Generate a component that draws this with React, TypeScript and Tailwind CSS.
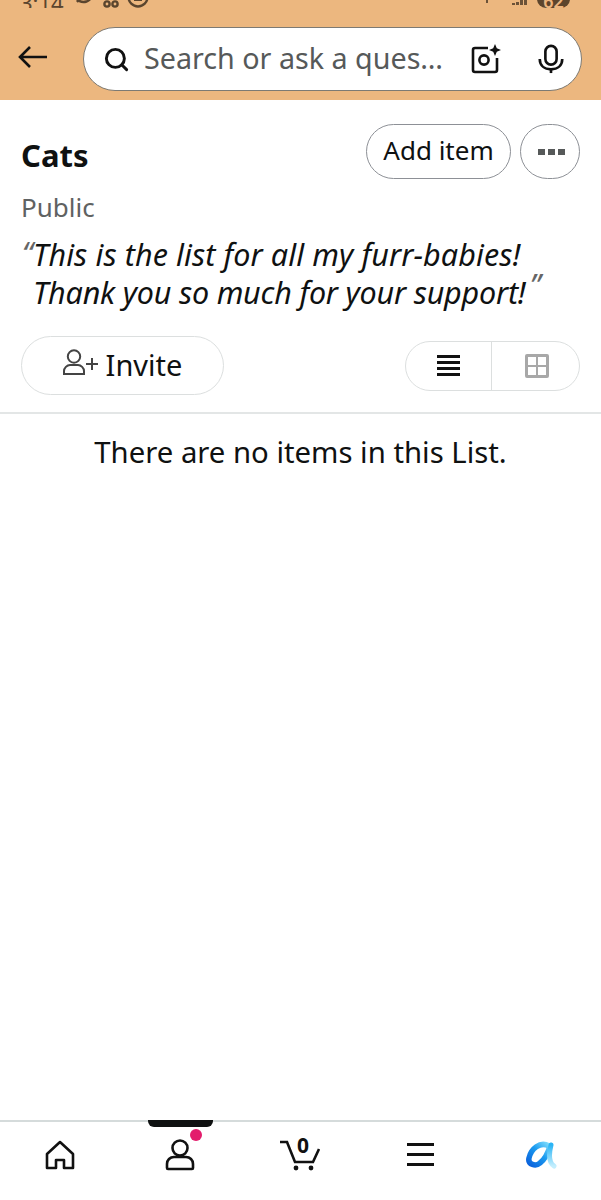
import { Search } from "lucide-react";

const Icon = ({ className, children }: { className: string; children: React.ReactNode }) => (
  <svg viewBox="0 0 32 32" fill="none" stroke="currentColor" strokeWidth="2.6" className={className}>
    {children}
  </svg>
);

const StatusBar = () => (
  <div className="h-[8px] overflow-hidden flex justify-between items-end pl-[20px] pr-[31px] text-[#5a452e]">
    <div className="flex items-end gap-[10px] text-[22px] leading-[16px]">
      <span className="mb-[-2px]">3:14</span>
      <svg viewBox="0 0 76 20" className="w-[76px] h-[20px]" fill="none" stroke="currentColor" strokeWidth="2.4">
        <path d="M1 8a9 9 0 1 0 17-6" />
        <path d="M14 3 3 14" />
        <circle cx="33" cy="16" r="2.6" />
        <circle cx="41" cy="16" r="2.6" />
        <circle cx="64" cy="9" r="9.5" />
        <rect x="60" y="4" width="8" height="9" fill="currentColor" stroke="none" />
      </svg>
    </div>
    <div className="flex items-end gap-[10px]">
      <div className="w-[2px] h-[3px] mb-[5px] bg-[#6b5238] mr-[14px]" />
      <div className="flex items-end gap-[1px] mb-[3px]">
        <i className="block w-[3px] h-[2px] bg-[#6b5238]" />
        <i className="block w-[3px] h-[3px] bg-[#6b5238]" />
        <i className="block w-[3px] h-[5px] bg-[#6b5238]" />
        <i className="block w-[3px] h-[5px] bg-[#6b5238]" />
      </div>
      <div className="w-[33px] h-[20px] rounded-b-[9px] bg-[#5d452c] text-[#edb67f] text-[18px] leading-[26px] text-center font-semibold">
        62
      </div>
    </div>
  </div>
);

const SearchHeader = () => (
  <div className="h-[100px] bg-[#ecb77f]">
    <StatusBar />
    <div className="flex items-center mt-[19px] pl-[18px] pr-[19px]">
      <svg viewBox="0 0 30 24" className="w-[30px] h-[24px] text-[#111] mr-[35px] shrink-0 mt-[-4px]" fill="none" stroke="currentColor" strokeWidth="2.6">
        <path d="M29 12H2M12 2 2 12l10 10" />
      </svg>
      <div className="flex-1 h-[64px] rounded-full bg-white border border-[#7d7a73] flex items-center pl-[19px] pr-[15px]">
        <Search className="w-[27px] h-[27px] text-[#111] shrink-0" strokeWidth={2.6} />
        <span className="ml-[14px] flex-1 text-[28.7px] leading-none text-[#565959] mt-[-2px]">Search or ask a ques…</span>
        <svg viewBox="0 0 32 32" className="w-[32px] h-[32px] text-[#111] shrink-0 mr-[35px]" fill="none" stroke="currentColor" strokeWidth="2.6">
          <path d="M19 5H6a2 2 0 0 0-2 2v20a2 2 0 0 0 2 2h20a2 2 0 0 0 2-2V15" />
          <circle cx="15" cy="17" r="4.6" />
          <path d="M26 1l1.8 4.2L32 7l-4.2 1.8L26 13l-1.8-4.2L20 7l4.2-1.8z" fill="currentColor" stroke="none" />
        </svg>
        <svg viewBox="0 0 32 32" className="w-[30px] h-[32px] text-[#111] shrink-0" fill="none" stroke="currentColor" strokeWidth="2.8">
          <rect x="10" y="2" width="12" height="20" rx="6" />
          <path d="M4 16c0 7 5 11 12 11s12-4 12-11" />
          <path d="M16 26v5" />
        </svg>
      </div>
    </div>
  </div>
);

const ListHeader = () => (
  <div className="pl-[21px] pr-[21px]">
    <div className="flex justify-between pt-[24px]">
      <h1 className="text-[31px] leading-[40px] font-bold text-[#0f1111] mt-[11px]">Cats</h1>
      <div className="flex gap-[9px]">
        <button className="w-[145px] h-[55px] rounded-full border border-[#8d9096] text-[26px] text-[#0f1111] leading-none pb-[3px]">
          Add item
        </button>
        <button className="w-[60px] h-[55px] rounded-full border border-[#8d9096] flex items-center justify-center gap-[3px] pl-[3px]">
          <i className="block w-[7px] h-[6px] bg-[#565959]" />
          <i className="block w-[7px] h-[6px] bg-[#565959]" />
          <i className="block w-[7px] h-[6px] bg-[#565959]" />
        </button>
      </div>
    </div>
    <p className="text-[26px] leading-[34px] text-[#5f6262] mt-[11px]">Public</p>
    <div className="relative mt-[11px] pl-[12px] text-[30.5px] leading-[38px] italic text-[#0f1111]">
      <span className="absolute left-[1px] top-[-2px] text-[#666]">“</span>
      <p className="whitespace-nowrap tracking-[0.1px]">This is the list for all my furr-babies!</p>
      <p className="whitespace-nowrap tracking-[-0.2px]">
        Thank you so much for your support!<span className="text-[#666] ml-[4px] relative top-[-8px]">”</span>
      </p>
    </div>
  </div>
);

const ActionsRow = () => (
  <div className="flex justify-between items-center pl-[21px] pr-[21px] mt-[25px] pb-[17px] border-b-2 border-[#e3e6e6]">
    <button className="w-[203px] h-[59px] rounded-full border border-[#dcdfdf] flex items-center justify-center text-[29px] text-[#0f1111] leading-none">
      <svg viewBox="0 0 36 26" className="w-[36px] h-[26px] mr-[7px] mt-[-8px] text-[#444]" fill="none" stroke="currentColor" strokeWidth="2">
        <circle cx="11" cy="7.5" r="6.2" />
        <path d="M1 25v-3c0-3 3-6 6-6h8c3 0 6 3 6 6v3z" />
        <path d="M23 15h12M29 9v12" />
      </svg>
      <span className="mt-[-2px]">Invite</span>
    </button>
    <div className="w-[175px] h-[50px] rounded-full border border-[#dcdfdf] flex">
      <div className="w-[86px] flex flex-col items-center justify-center gap-[3px] border-r border-[#dcdfdf]">
        <i className="block w-[23px] h-[3px] bg-[#111]" />
        <i className="block w-[23px] h-[3px] bg-[#111]" />
        <i className="block w-[23px] h-[3px] bg-[#111]" />
        <i className="block w-[23px] h-[3px] bg-[#111]" />
      </div>
      <div className="flex-1 flex items-center justify-center pl-[3px]">
        <div className="w-[24px] h-[24px] rounded-[2px] border-[3px] border-[#a8a8a8] grid grid-cols-2">
          <i className="block border-r border-b border-[#a8a8a8]" />
          <i className="block border-l border-b border-[#a8a8a8]" />
          <i className="block border-r border-t border-[#a8a8a8]" />
          <i className="block border-l border-t border-[#a8a8a8]" />
        </div>
      </div>
    </div>
  </div>
);

const BottomNav = () => (
  <div className="relative h-[80px] border-t-2 border-[#d5dbdb] flex items-start bg-white">
    <div className="absolute left-[148px] top-[-2px] w-[65px] h-[7px] bg-[#0f1111] rounded-b-[6px]" />
    <div className="w-[120px] flex justify-center pt-[17px]">
      <Icon className="w-[32px] h-[32px] text-[#111]">
        <path d="M3 15 16 3l13 12v14H20v-8h-8v8H3z" strokeLinejoin="round" />
      </Icon>
    </div>
    <div className="w-[120px] flex justify-center pt-[16px] relative">
      <Icon className="w-[32px] h-[34px] text-[#111]">
        <circle cx="16" cy="9" r="7.5" />
        <path d="M3 29v-4c0-4 3-7 7-7h12c4 0 7 3 7 7v4a1 1 0 0 1-1 1H4a1 1 0 0 1-1-1z" />
      </Icon>
      <div className="absolute left-[70px] top-[7px] w-[12px] h-[12px] rounded-full bg-[#e31c6c]" />
    </div>
    <div className="w-[120px] flex justify-center pt-[18px] relative">
      <svg viewBox="0 0 42 32" className="w-[42px] h-[32px] text-[#111]" fill="none" stroke="currentColor" strokeWidth="2.6">
        <path d="M1 2h7l8 20h18l6-13" />
        <circle cx="17" cy="28" r="2.4" fill="currentColor" stroke="none" />
        <circle cx="32" cy="28" r="2.4" fill="currentColor" stroke="none" />
      </svg>
      <span className="absolute left-[57px] top-[10px] text-[21px] leading-[26px] font-bold text-[#111]">0</span>
    </div>
    <div className="w-[121px] flex flex-col items-center gap-[7px] pt-[21px]">
      <i className="block w-[27px] h-[3px] bg-[#111]" />
      <i className="block w-[27px] h-[3px] bg-[#111]" />
      <i className="block w-[27px] h-[3px] bg-[#111]" />
    </div>
    <div className="w-[120px] flex justify-center pt-[19px]">
      <svg viewBox="0 0 32 28" className="w-[32px] h-[28px]" fill="none">
        <defs>
          <linearGradient id="alexaBowl" x1="0" y1="1" x2="1" y2="0">
            <stop offset="0" stopColor="#0b62dc" />
            <stop offset="0.55" stopColor="#1a9bf0" />
            <stop offset="1" stopColor="#7fdcfc" />
          </linearGradient>
          <linearGradient id="alexaStem" x1="0" y1="0" x2="0" y2="1">
            <stop offset="0" stopColor="#2ab4f5" />
            <stop offset="1" stopColor="#c4eefd" />
          </linearGradient>
        </defs>
        <path d="M24 5C15 0 6 8 4 17c-1.5 7 7 8.5 11 5 4-3 8-10 10-17" stroke="url(#alexaBowl)" strokeWidth="5.5" strokeLinecap="round" />
        <path d="M26 4c-2 8-3 17 3 21" stroke="url(#alexaStem)" strokeWidth="5" strokeLinecap="round" />
      </svg>
    </div>
  </div>
);

export default function App() {
  return (
    <div className="w-[601px] h-[1200px] bg-white flex flex-col overflow-hidden font-['Noto_Sans',sans-serif]">
      <SearchHeader />
      <ListHeader />
      <ActionsRow />
      <p className="text-center text-[29.3px] leading-[40px] text-[#0f1111] mt-[18px]">There are no items in this List.</p>
      <div className="flex-1" />
      <BottomNav />
    </div>
  );
}
